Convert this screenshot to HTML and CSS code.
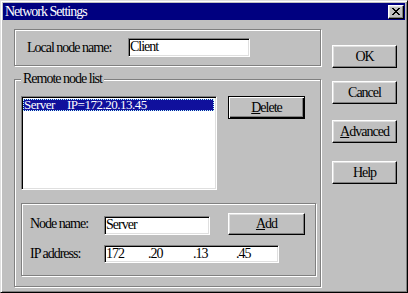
FILE: index.html
```html
<!DOCTYPE html>
<html lang="en">
<head>
    <meta charset="UTF-8">
    <title>Network Settings</title>
    <link rel="stylesheet" href="styles.css">
</head>
<body>
    <!-- Dialog window -->
    <div class="window">
        <div class="titlebar">
            <span class="title">Network Settings</span>
            <button class="close" aria-label="Close">
                <svg width="8" height="7" viewBox="0 0 8 7" shape-rendering="crispEdges">
                    <path fill="#000" d="M0 0h2v1h-2zM6 0h2v1h-2zM1 1h2v1h-2zM5 1h2v1h-2zM2 2h4v1h-4zM3 3h2v1h-2zM2 4h4v1h-4zM1 5h2v1h-2zM5 5h2v1h-2zM0 6h2v1h-2zM6 6h2v1h-2z"/>
                </svg>
            </button>
        </div>

        <div class="content">
            <div class="left">
                <!-- Local node -->
                <div class="group local">
                    <span class="label local-label">Local node name:</span>
                    <div class="field client">Client</div>
                </div>

                <!-- Remote nodes -->
                <div class="group remote">
                    <span class="legend">Remote node list</span>
                    <div class="list-row">
                        <div class="listbox">
                            <div class="item selected"><span class="item-name">Server</span><span>IP=172.20.13.45</span></div>
                        </div>
                        <button class="btn default delete"><u>D</u>elete</button>
                    </div>

                    <div class="group node">
                        <div class="node-row">
                            <span class="label node-label">Node name:</span>
                            <div class="field node-name">Server</div>
                            <button class="btn add"><u>A</u>dd</button>
                        </div>
                        <div class="node-row ip-row">
                            <span class="label node-label">IP address:</span>
                            <div class="field ip">
                                <span class="octet o1">172</span>
                                <span class="octet o2">.20</span>
                                <span class="octet o3">.13</span>
                                <span class="octet">.45</span>
                            </div>
                        </div>
                    </div>
                </div>
            </div>

            <!-- Dialog buttons -->
            <div class="right">
                <button class="btn side ok">OK</button>
                <button class="btn side cancel">Cancel</button>
                <button class="btn side advanced"><u>A</u>dvanced</button>
                <button class="btn side help">Help</button>
            </div>
        </div>
    </div>
</body>
</html>
```

FILE: styles.css
```css
/* Base */
body {
    margin: 0;
    background-color: #c0c0c0;
    font-family: "Liberation Serif", serif;
    font-size: 14px;
    color: #000;
}

/* Window frame */
.window {
    width: 408px;
    height: 293px;
    box-sizing: border-box;
    background-color: #c0c0c0;
    border: 1px solid;
    border-color: #dfdfdf #000 #000 #dfdfdf;
    box-shadow: inset 1px 1px #fff, inset -1px -1px #808080;
    padding: 2px;
}

/* Title bar */
.titlebar {
    height: 17px;
    background-color: #000080;
    color: #fff;
    display: flex;
    align-items: center;
    justify-content: space-between;
    padding: 0 1px 0 2px;
}

.title {
    letter-spacing: -1px;
    line-height: 17px;
}

.close {
    width: 16px;
    height: 14px;
    box-sizing: border-box;
    padding: 0;
    background-color: #c0c0c0;
    border: 1px solid;
    border-color: #fff #000 #000 #fff;
    box-shadow: inset -1px -1px #808080, inset 1px 1px #dfdfdf;
    display: flex;
    align-items: center;
    justify-content: center;
}

.close svg {
    display: block;
}

/* Layout */
.content {
    display: flex;
    padding: 9px 0 0 11px;
}

.left {
    width: 307px;
}

.right {
    width: 65px;
    margin-left: 11px;
    padding-top: 16px;
    display: flex;
    flex-direction: column;
}

/* Etched group boxes */
.group {
    box-sizing: border-box;
    border: 1px solid #808080;
    box-shadow: inset 1px 1px #fff, 1px 1px #fff;
}

.label {
    letter-spacing: -1px;
    white-space: nowrap;
}

.local {
    height: 37px;
    display: flex;
    align-items: center;
    padding-left: 12px;
}

.local-label {
    width: 101px;
}

.remote {
    height: 208px;
    margin-top: 13px;
    padding-left: 6px;
}

.legend {
    display: block;
    width: max-content;
    margin-top: -8px;
    padding: 0 2px;
    line-height: 14px;
    letter-spacing: -1px;
    background-color: #c0c0c0;
}

/* Sunken fields */
.field {
    box-sizing: border-box;
    height: 19px;
    background-color: #fff;
    border: 1px solid;
    border-color: #808080 #fff #fff #808080;
    box-shadow: inset 1px 1px #000, inset -1px -1px #dfdfdf;
    padding: 0 1px;
    line-height: 16px;
    letter-spacing: -1px;
    white-space: nowrap;
}

.client {
    width: 122px;
}

/* List */
.list-row {
    display: flex;
    align-items: flex-start;
    margin-top: 10px;
}

.listbox {
    width: 196px;
    height: 94px;
    box-sizing: border-box;
    background-color: #fff;
    border: 1px solid;
    border-color: #808080 #fff #fff #808080;
    box-shadow: inset 1px 1px #000, inset -1px -1px #dfdfdf;
    padding: 2px 2px 0 1px;
}

.item {
    height: 12px;
    line-height: 11px;
    font-size: 13px;
    letter-spacing: -0.5px;
    white-space: nowrap;
    box-sizing: border-box;
    padding-left: 1px;
}

.item.selected {
    background-color: #10109c;
    color: #fff;
    outline: 1px dotted #bff;
    outline-offset: -1px;
}

.item-name {
    display: inline-block;
    width: 43px;
}

/* Buttons */
.btn {
    box-sizing: border-box;
    width: 77px;
    height: 22px;
    padding: 0;
    background-color: #c0c0c0;
    border: 1px solid;
    border-color: #fff #000 #000 #fff;
    box-shadow: inset -1px -1px #808080, inset 1px 1px #dfdfdf;
    font-family: inherit;
    font-size: 14px;
    letter-spacing: -1px;
    color: #000;
}

.btn u {
    text-underline-offset: 1px;
}

.btn.default {
    border-color: #000;
    box-shadow: inset 1px 1px #fff, inset -1px -1px #000, inset -2px -2px #808080;
}

.delete {
    height: 23px;
    margin-left: 11px;
}

.side {
    width: 65px;
    height: 23px;
}

.cancel {
    margin-top: 13px;
}

.advanced {
    margin-top: 16px;
}

.help {
    margin-top: 18px;
}

/* Node editor */
.node {
    width: 295px;
    height: 73px;
    margin-top: 13px;
    padding: 9px 0 0 8px;
}

.node-row {
    display: flex;
    align-items: flex-end;
}

.node-label {
    width: 74px;
    align-self: center;
}

.node-name {
    width: 106px;
}

.add {
    margin-left: 18px;
}

.ip-row {
    margin-top: 10px;
    align-items: center;
}

.ip {
    width: 175px;
    height: 18px;
    line-height: 15px;
    display: flex;
}

.octet {
    display: block;
}

.o1 {
    width: 42px;
}

.o2 {
    width: 45px;
}

.o3 {
    width: 43px;
}
```
